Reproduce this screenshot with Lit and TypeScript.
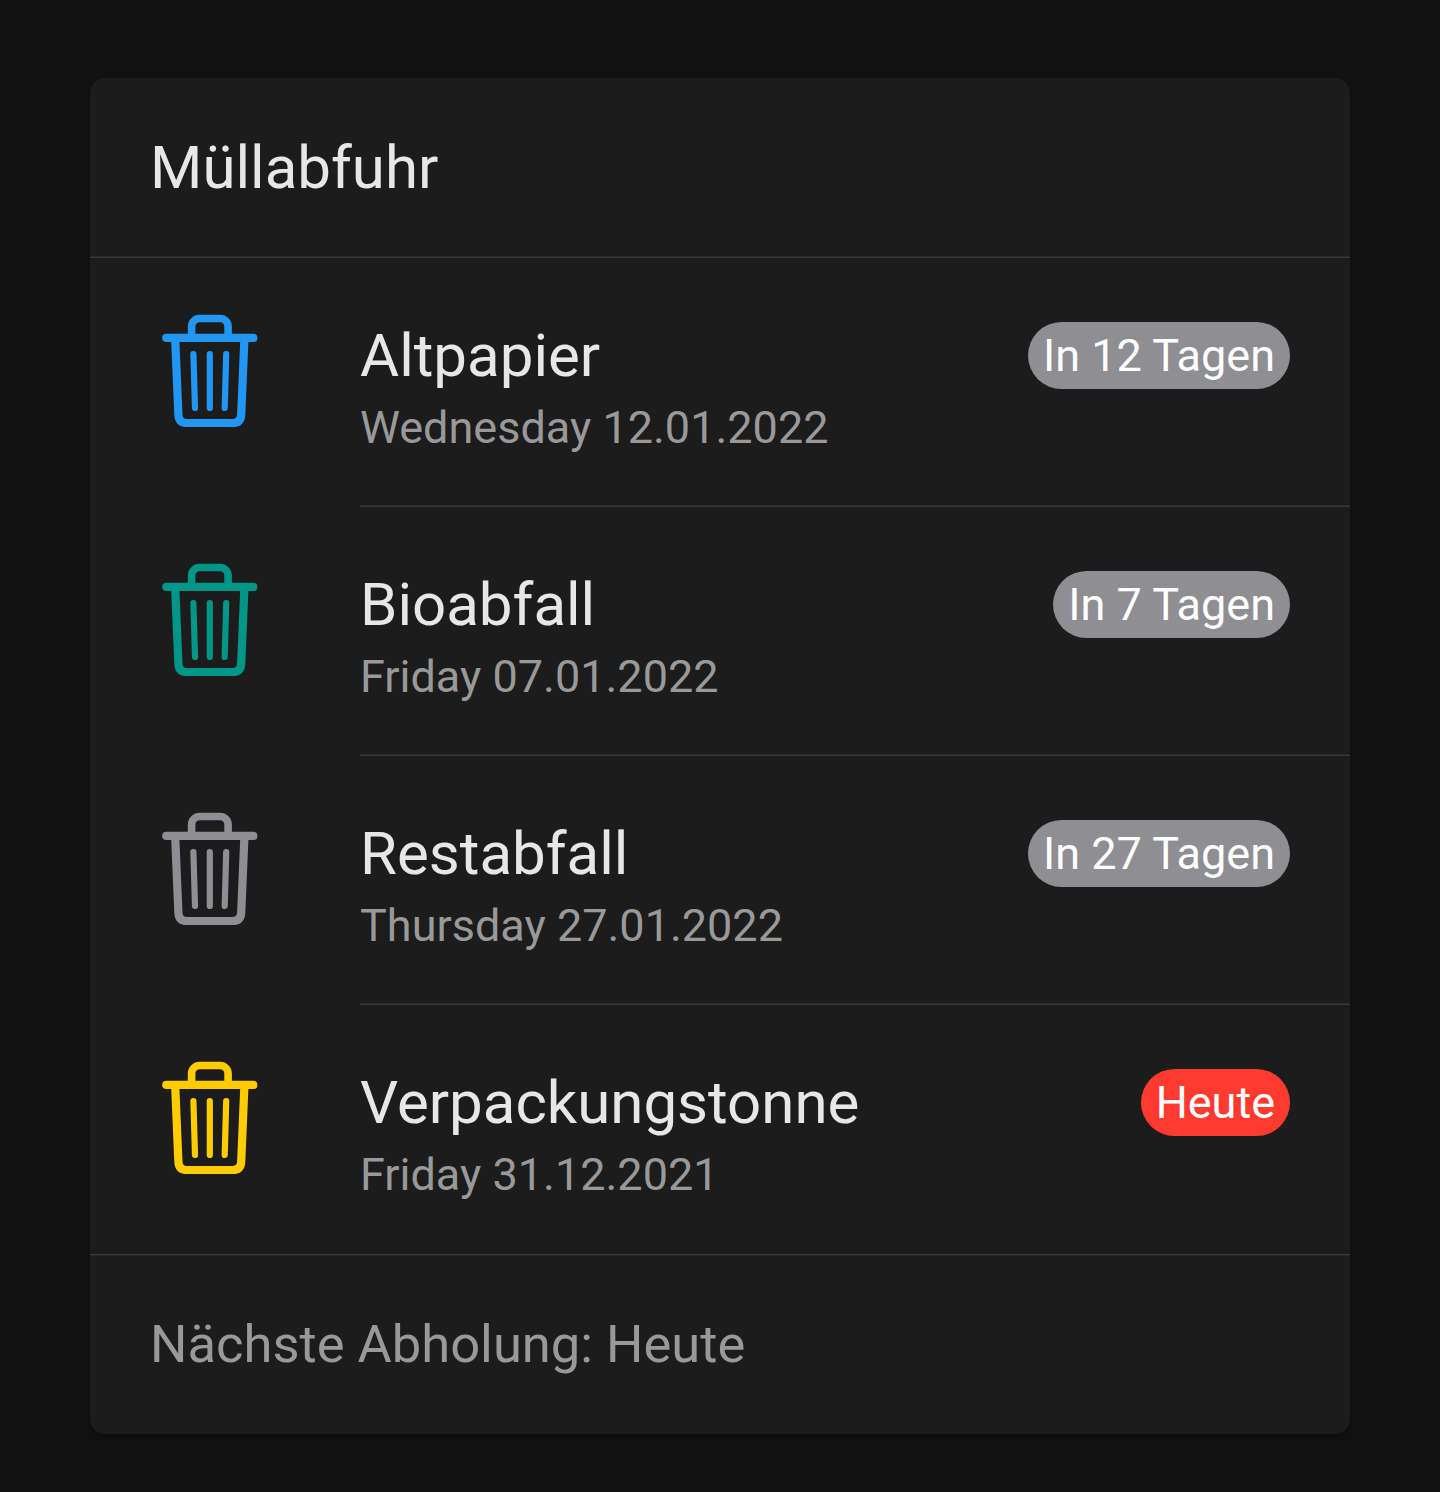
import { LitElement, html, css, svg } from "lit";
import { customElement, property } from "lit/decorators.js";

interface Pickup {
  name: string;
  date: string;
  due: string;
  tone: string;
}

const PICKUPS: Pickup[] = [
  { name: "Altpapier", date: "Wednesday 12.01.2022", due: "In 12 Tagen", tone: "blue" },
  { name: "Bioabfall", date: "Friday 07.01.2022", due: "In 7 Tagen", tone: "teal" },
  { name: "Restabfall", date: "Thursday 27.01.2022", due: "In 27 Tagen", tone: "gray" },
  { name: "Verpackungstonne", date: "Friday 31.12.2021", due: "Heute", tone: "yellow" },
];

@customElement("trash-icon")
export class TrashIcon extends LitElement {
  static styles = css`
    :host { display: block; width: 120px; height: 120px; }
    .icon { display: block; width: 100%; height: 100%; fill: none; stroke: currentColor; stroke-linecap: round; }
  `;
  render() {
    return html`<svg class="icon" viewBox="0 0 120 120" aria-hidden="true">
      ${svg`
        <path stroke-width="7.6" d="M41.6 25V15.5a8 8 0 0 1 8-8H70.1a8 8 0 0 1 8 8V25" />
        <path stroke-width="8.2" d="M16.3 26.9H103.3" />
        <path stroke-width="8.2" d="M25.2 28L28.4 103.8Q28.8 112 36.8 112H82.8Q90.8 112 91.2 103.8L94.4 28" />
        <path stroke-width="6.2" d="M43.4 43L45 97M59.8 43V97M76.2 43L74.7 97" />
      `}
    </svg>`;
  }
}

@customElement("pickup-row")
export class PickupRow extends LitElement {
  @property({ attribute: false }) item!: Pickup;

  static styles = css`
    :host { display: flex; padding-left: 60px; height: 249px; }
    .media { width: 210px; padding-top: 53px; box-sizing: border-box; flex: none; }
    .blue { color: #2196f3; }
    .teal { color: #009688; }
    .gray { color: #8e8e93; }
    .yellow { color: #ffcc00; }
    .inner {
      flex: 1;
      display: flex;
      justify-content: space-between;
      align-items: flex-start;
      padding: 60px 60px 0 0;
      box-sizing: border-box;
      border-bottom: 1px solid #393939;
      box-shadow: inset 0 -1px #2b2b2b;
    }
    :host(:last-child) .inner { border-bottom-color: transparent; box-shadow: none; }
    .name { font-size: 60px; line-height: 75px; color: #e7e7e7; }
    .date { font-size: 45px; line-height: 70px; color: #999; }
    .badge {
      margin-top: 4px;
      height: 67px;
      padding: 0 15px;
      border-radius: 34px;
      background: #8e8e93;
      color: #fff;
      font-size: 45px;
      line-height: 67px;
      white-space: nowrap;
    }
    .today { background: #ff3b30; }
  `;
  render() {
    const { name, date, due, tone } = this.item;
    return html`
      <div class="media"><trash-icon class=${tone}></trash-icon></div>
      <div class="inner">
        <div>
          <div class="name">${name}</div>
          <div class="date">${date}</div>
        </div>
        <span class="badge ${due === "Heute" ? "today" : ""}">${due}</span>
      </div>
    `;
  }
}

@customElement("app-root")
export class AppRoot extends LitElement {
  static styles = css`
    :host {
      display: block;
      box-sizing: border-box;
      height: 1492px;
      padding: 78px 90px 0;
      background: #121212;
      font-family: Roboto, "Liberation Sans", sans-serif;
      font-weight: 400;
    }
    .card {
      height: 1356px;
      border-radius: 15px;
      background: #1c1c1c;
      box-shadow: 0 4px 8px rgba(0, 0, 0, 0.3);
      display: flex;
      flex-direction: column;
    }
    .header {
      box-sizing: border-box;
      height: 180px;
      padding-left: 60px;
      border-bottom: 1px solid #393939;
      box-shadow: inset 0 -1px #2b2b2b;
      font-size: 60px;
      line-height: 180px;
      color: #e7e7e7;
    }
    .footer {
      flex: 1;
      padding-left: 60px;
      border-top: 1px solid #393939;
      box-shadow: inset 0 1px #262626;
      font-size: 52.5px;
      line-height: 178px;
      color: #999;
    }
  `;
  render() {
    return html`
      <section class="card">
        <header class="header">Müllabfuhr</header>
        <div class="list">${PICKUPS.map((p) => html`<pickup-row .item=${p}></pickup-row>`)}</div>
        <footer class="footer">Nächste Abholung: Heute</footer>
      </section>
    `;
  }
}
